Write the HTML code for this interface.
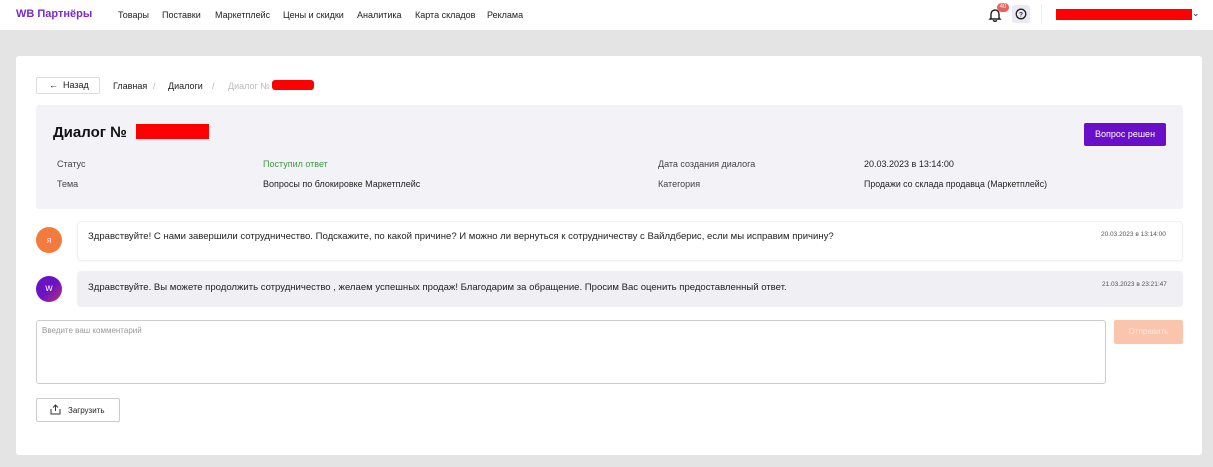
<!DOCTYPE html>
<html><head><meta charset="utf-8"><style>
*{box-sizing:border-box;margin:0;padding:0}
body{width:1213px;height:467px;background:#e4e4e4;font-family:"Liberation Sans",sans-serif;font-size:9px;color:#222;position:relative;overflow:hidden}
.a{position:absolute}
.nav{left:0;top:0;width:1213px;height:30px;background:#fff}
.nav span{position:absolute;top:10px;font-size:9px;color:#222}
</style></head><body>
<div class="a nav">
<span style="left:16px;top:8px;font-size:11px;font-weight:bold;color:#7a2bc6">WB Партнёры</span>
<span style="left:118px">Товары</span>
<span style="left:162px">Поставки</span>
<span style="left:215px">Маркетплейс</span>
<span style="left:283px">Цены и скидки</span>
<span style="left:357px">Аналитика</span>
<span style="left:415px">Карта складов</span>
<span style="left:487px">Реклама</span>
<svg class="a" style="left:988px;top:8px" width="14" height="14" viewBox="0 0 14 14"><path d="M3 10V6a4 4 0 018 0v4l1 1H2zM5.5 12a1.5 1.5 0 003 0" fill="none" stroke="#222" stroke-width="1.4"/></svg>
<div class="a" style="left:997px;top:3px;width:12px;height:9px;border-radius:5px;background:#e8625b;color:#fff;font-size:6px;text-align:center;line-height:9px">40</div>
<div class="a" style="left:1012px;top:5px;width:18px;height:18px;border-radius:3px;background:#ece8f4"></div>
<svg class="a" style="left:1015px;top:8px" width="12" height="12" viewBox="0 0 12 12"><circle cx="6" cy="6" r="4.8" fill="none" stroke="#222" stroke-width="1.3"/><text x="6" y="8.3" font-size="6.5" text-anchor="middle" font-family="Liberation Sans" font-weight="bold" fill="#222">?</text></svg>
<div class="a" style="left:1041px;top:4px;width:1px;height:20px;background:#eee"></div>
<div class="a" style="left:1056px;top:9px;width:136px;height:11px;background:#f00"></div>
<span style="left:1192px;top:8px">⌄</span>
</div>
<div class="a" style="left:16px;top:56px;width:1186px;height:399px;background:#fff;border-radius:3px"></div>
<div class="a" style="left:36px;top:77px;width:64px;height:17px;border:1px solid #ddd;border-radius:2px;font-size:9px;line-height:15px;padding-left:12px">←&nbsp; Назад</div>
<div class="a" style="left:113px;top:81px">Главная</div>
<div class="a" style="left:153px;top:81px;color:#bbb">/</div>
<div class="a" style="left:168px;top:81px">Диалоги</div>
<div class="a" style="left:212px;top:81px;color:#bbb">/</div>
<div class="a" style="left:228px;top:81px;color:#bbb">Диалог №</div>
<div class="a" style="left:272px;top:80px;width:42px;height:10px;border-radius:3px;background:#f00"></div>
<div class="a" style="left:36px;top:105px;width:1147px;height:104px;background:#f3f3f7;border-radius:3px"></div>
<div class="a" style="left:53px;top:124px;font-size:15px;font-weight:bold;color:#111">Диалог №</div>
<div class="a" style="left:136px;top:124px;width:73px;height:15px;background:#f00"></div>
<div class="a" style="left:1084px;top:123px;width:82px;height:23px;background:#6a0fc9;border-radius:2px;color:#fff;font-size:9px;text-align:center;line-height:23px">Вопрос решен</div>
<div class="a" style="left:57px;top:159px;color:#444">Статус</div>
<div class="a" style="left:263px;top:159px;color:#3a9a3a">Поступил ответ</div>
<div class="a" style="left:658px;top:159px;color:#444">Дата создания диалога</div>
<div class="a" style="left:864px;top:159px">20.03.2023 в 13:14:00</div>
<div class="a" style="left:57px;top:179px;color:#444">Тема</div>
<div class="a" style="left:263px;top:179px">Вопросы по блокировке Маркетплейс</div>
<div class="a" style="left:658px;top:179px;color:#444">Категория</div>
<div class="a" style="left:864px;top:179px;font-size:8.8px">Продажи со склада продавца (Маркетплейс)</div>
<div class="a" style="left:36px;top:227px;width:26px;height:26px;border-radius:50%;background:#f47a3e;color:#fde;font-size:9px;text-align:center;line-height:26px">я</div>
<div class="a" style="left:77px;top:221px;width:1106px;height:40px;background:#fff;border:1px solid #f0f0f0;border-radius:4px;box-shadow:0 1px 2px rgba(0,0,0,.04)"></div>
<div class="a" style="left:88px;top:231px;font-size:9.55px">Здравствуйте! С нами завершили сотрудничество. Подскажите, по какой причине? И можно ли вернуться к сотрудничеству с Вайлдберис, если мы исправим причину?</div>
<div class="a" style="left:1101px;top:231px;font-size:6.5px;color:#555">20.03.2023 в 13:14:00</div>
<div class="a" style="left:36px;top:276px;width:26px;height:26px;border-radius:50%;background:linear-gradient(135deg,#6a12c4 50%,#c0306e);color:#fff;font-size:10px;text-align:center;line-height:26px">w</div>
<div class="a" style="left:77px;top:271px;width:1106px;height:36px;background:#f0f0f4;border-radius:4px"></div>
<div class="a" style="left:88px;top:282px;font-size:9.55px">Здравствуйте. Вы можете продолжить сотрудничество , желаем успешных продаж! Благодарим за обращение. Просим Вас оценить предоставленный ответ.</div>
<div class="a" style="left:1102px;top:281px;font-size:6.5px;color:#555">21.03.2023 в 23:21:47</div>
<div class="a" style="left:36px;top:320px;width:1070px;height:64px;border:1px solid #ccc;border-radius:3px"></div>
<div class="a" style="left:42px;top:326px;font-size:8px;color:#999">Введите ваш комментарий</div>
<div class="a" style="left:1114px;top:320px;width:69px;height:24px;background:#fbc4ad;border-radius:2px;color:#fde8df;font-size:8px;text-align:center;line-height:24px">Отправить</div>
<div class="a" style="left:36px;top:398px;width:84px;height:24px;border:1px solid #ccc;border-radius:2px"></div>
<svg class="a" style="left:50px;top:404px" width="11" height="11" viewBox="0 0 11 11"><path d="M1 5v5h9V5M5.5 7V1M3 3.5l2.5-2.5L8 3.5" fill="none" stroke="#333" stroke-width="1"/></svg>
<div class="a" style="left:68px;top:406px;font-size:8px">Загрузить</div>
</body></html>
